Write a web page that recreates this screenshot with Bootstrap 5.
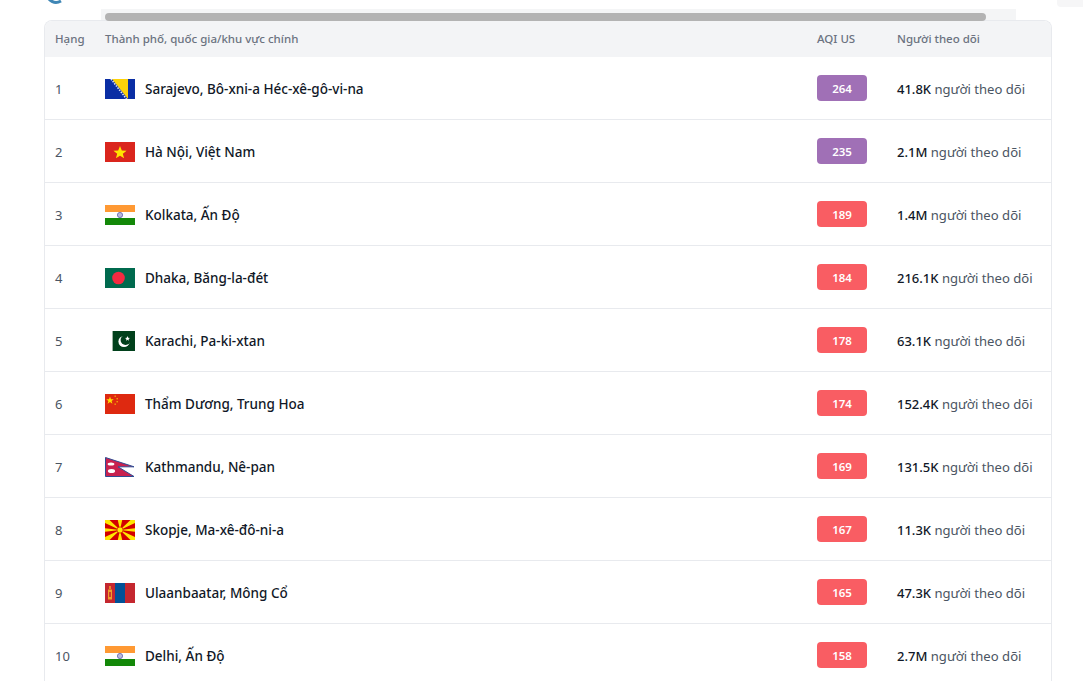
<!DOCTYPE html>
<html lang="vi">
<head>
<meta charset="utf-8">
<title>Xếp hạng AQI</title>
<link href="https://cdn.jsdelivr.net/npm/bootstrap@5.3.0/dist/css/bootstrap.min.css" rel="stylesheet">
<style>
html,body{height:681px;overflow:hidden;background:#fff}
body{font-family:"Noto Sans","Open Sans",sans-serif;font-size:13px;color:#1f2937}
.page-wrap{padding:0 31px 0 44px;position:relative}
.top-strip{height:20px;position:relative}
.logo-arc{position:absolute;left:2px;top:-12px}
.scroll-track{position:absolute;left:57px;top:9px;width:915px;height:11px;background:#f4f5f6}
.scroll-thumb{position:absolute;left:4px;top:4px;width:881px;height:8px;background:#b3b3b3;border-radius:4px;z-index:3}
.corner-tab{position:absolute;left:1057px;top:0;width:26px;height:7px;background:#f6f6f7;border-radius:0 0 0 4px}
.rank-card{border:1px solid #e8eaee;border-bottom:0;border-radius:8px 8px 0 0;overflow:hidden;width:1008px}
.rank-table{table-layout:fixed;width:1006px;margin:0;font-size:13px;border-collapse:separate;border-spacing:0}
.rank-table th{height:36px;background:#f3f4f6;color:#6b7280;font-weight:500;font-size:11.5px;padding:0 0 0 10px;vertical-align:middle;border:0;white-space:nowrap}
.rank-table td{height:63px;padding:0 0 0 10px;vertical-align:middle;border-top:0;border-bottom:1px solid #e8eaee;white-space:nowrap;color:#1f2937}
.rank-table th.name-col,.rank-table td.name-col{padding-left:0}
.rank-table th.aqi-col,.rank-table td.aqi-col{padding-left:0}
.rank-table th.fol-col,.rank-table td.fol-col{padding-left:0}
.rank-table td.rank-num{color:#4b5563}
.flag-box{width:30px;height:20px;flex:none;display:block;margin:2px 10px 0 0}
.city-name{font-weight:500;font-size:13.5px;color:#111827;position:relative;top:1px}
.aqi-chip{display:flex;align-items:center;justify-content:center;width:50px;height:26px;border-radius:4px;color:#fff;font-weight:600;font-size:11.5px;padding-top:2px}
.aqi-purple{background:#a070b6}
.aqi-red{background:#f95d63}
.fol-line,.rank-line{position:relative;top:2px;display:block}
.fol-num{font-weight:500;color:#111827;font-size:13px}
.fol-txt{color:#4b5563;font-size:13.1px}
</style>
</head>
<body>
<div class="corner-tab"></div>
<div class="page-wrap">
  <div class="top-strip">
    <svg class="logo-arc" width="18" height="16" viewBox="0 0 18 16"><path d="M2 10 Q8 17 15 13" fill="none" stroke="#3f86b5" stroke-width="3"/></svg>
    <div class="scroll-track"><div class="scroll-thumb"></div></div>
  </div>
  <div class="rank-card">
    <table class="table rank-table">
      <colgroup><col style="width:60px"><col style="width:712px"><col style="width:80px"><col style="width:154px"></colgroup>
      <thead><tr><th>Hạng</th><th class="name-col">Thành phố, quốc gia/khu vực chính</th><th class="aqi-col">AQI US</th><th class="fol-col">Người theo dõi</th></tr></thead>
      <tbody>
        <tr><td class="rank-num"><span class="rank-line">1</span></td><td class="name-col"><div class="d-flex align-items-center"><svg class="flag-box" viewBox="0 0 30 20"><rect width="30" height="20" fill="#0a2ea4"/><path d="M7 0H23V20Z" fill="#fdd20a"/><path d="M6 0L21.5 20" stroke="#dfe3f5" stroke-width="1.6" stroke-dasharray="1.5 1.2"/></svg><span class="city-name">Sarajevo, Bô-xni-a Héc-xê-gô-vi-na</span></div></td><td class="aqi-col"><div class="aqi-chip aqi-purple">264</div></td><td class="fol-col"><span class="fol-line"><span class="fol-num">41.8K</span> <span class="fol-txt">người theo dõi</span></span></td></tr>
        <tr><td class="rank-num"><span class="rank-line">2</span></td><td class="name-col"><div class="d-flex align-items-center"><svg class="flag-box" viewBox="0 0 30 20"><rect width="30" height="20" fill="#da251d"/><polygon points="15,4 16.8,8.5 21.6,8.7 17.8,11.7 19.1,16.3 15,13.7 10.9,16.3 12.2,11.7 8.4,8.7 13.2,8.5" fill="#ffe500"/></svg><span class="city-name">Hà Nội, Việt Nam</span></div></td><td class="aqi-col"><div class="aqi-chip aqi-purple">235</div></td><td class="fol-col"><span class="fol-line"><span class="fol-num">2.1M</span> <span class="fol-txt">người theo dõi</span></span></td></tr>
        <tr><td class="rank-num"><span class="rank-line">3</span></td><td class="name-col"><div class="d-flex align-items-center"><svg class="flag-box" viewBox="0 0 30 20"><rect width="30" height="20" fill="#fff"/><rect width="30" height="7" fill="#ff9933"/><rect y="13" width="30" height="7" fill="#138808"/><circle cx="15" cy="10" r="2.6" fill="#b9b9dc" stroke="#5f5fae" stroke-width=".8"/></svg><span class="city-name">Kolkata, Ấn Độ</span></div></td><td class="aqi-col"><div class="aqi-chip aqi-red">189</div></td><td class="fol-col"><span class="fol-line"><span class="fol-num">1.4M</span> <span class="fol-txt">người theo dõi</span></span></td></tr>
        <tr><td class="rank-num"><span class="rank-line">4</span></td><td class="name-col"><div class="d-flex align-items-center"><svg class="flag-box" viewBox="0 0 30 20"><rect width="30" height="20" fill="#006a4e"/><circle cx="13.5" cy="10" r="6.3" fill="#f42a41"/></svg><span class="city-name">Dhaka, Băng-la-đét</span></div></td><td class="aqi-col"><div class="aqi-chip aqi-red">184</div></td><td class="fol-col"><span class="fol-line"><span class="fol-num">216.1K</span> <span class="fol-txt">người theo dõi</span></span></td></tr>
        <tr><td class="rank-num"><span class="rank-line">5</span></td><td class="name-col"><div class="d-flex align-items-center"><svg class="flag-box" viewBox="0 0 30 20"><rect x="7" width="1" height="20" fill="#9db3a4"/><rect x="8" width="22" height="20" fill="#01411c"/><circle cx="19" cy="10.5" r="5.6" fill="#fff"/><circle cx="20.6" cy="9" r="5" fill="#01411c"/><polygon points="22.5,5 23.2,6.8 25,7 23.6,8 24,9.8 22.5,8.8 21,9.8 21.4,8 20,7 21.8,6.8" fill="#fff"/></svg><span class="city-name">Karachi, Pa-ki-xtan</span></div></td><td class="aqi-col"><div class="aqi-chip aqi-red">178</div></td><td class="fol-col"><span class="fol-line"><span class="fol-num">63.1K</span> <span class="fol-txt">người theo dõi</span></span></td></tr>
        <tr><td class="rank-num"><span class="rank-line">6</span></td><td class="name-col"><div class="d-flex align-items-center"><svg class="flag-box" viewBox="0 0 30 20"><rect width="30" height="20" fill="#de2910"/><polygon points="5,2.5 6,5.2 8.8,5.3 6.6,7 7.4,9.7 5,8.1 2.6,9.7 3.4,7 1.2,5.3 4,5.2" fill="#ffde00"/><g fill="#f3a50a"><rect x="9.5" y="1.5" width="1.4" height="1.4"/><rect x="11.5" y="4" width="1.4" height="1.4"/><rect x="11.5" y="7" width="1.4" height="1.4"/><rect x="9.5" y="9.5" width="1.4" height="1.4"/></g></svg><span class="city-name">Thẩm Dương, Trung Hoa</span></div></td><td class="aqi-col"><div class="aqi-chip aqi-red">174</div></td><td class="fol-col"><span class="fol-line"><span class="fol-num">152.4K</span> <span class="fol-txt">người theo dõi</span></span></td></tr>
        <tr><td class="rank-num"><span class="rank-line">7</span></td><td class="name-col"><div class="d-flex align-items-center"><svg class="flag-box" viewBox="0 0 30 20"><path d="M.5 .5L29 9.8H13L29 19.5H.5Z" fill="#c8214f" stroke="#2f4c93" stroke-width="1"/><ellipse cx="6" cy="7" rx="3.4" ry="1.6" fill="#fff"/><ellipse cx="6.5" cy="14" rx="3.6" ry="2" fill="#fff"/></svg><span class="city-name">Kathmandu, Nê-pan</span></div></td><td class="aqi-col"><div class="aqi-chip aqi-red">169</div></td><td class="fol-col"><span class="fol-line"><span class="fol-num">131.5K</span> <span class="fol-txt">người theo dõi</span></span></td></tr>
        <tr><td class="rank-num"><span class="rank-line">8</span></td><td class="name-col"><div class="d-flex align-items-center"><svg class="flag-box" viewBox="0 0 30 20"><rect width="30" height="20" fill="#d20000"/><g fill="#ffe600"><path d="M0 0H4.5L15 10 0 3Z"/><path d="M30 0H25.5L15 10 30 3Z"/><path d="M0 20H4.5L15 10 0 17Z"/><path d="M30 20H25.5L15 10 30 17Z"/><path d="M12.8 0H17.2L15 10Z"/><path d="M12.8 20H17.2L15 10Z"/><path d="M0 8.2V11.8L15 10Z"/><path d="M30 8.2V11.8L15 10Z"/></g><circle cx="15" cy="10" r="3" fill="#ffe600" stroke="#d20000" stroke-width=".6"/></svg><span class="city-name">Skopje, Ma-xê-đô-ni-a</span></div></td><td class="aqi-col"><div class="aqi-chip aqi-red">167</div></td><td class="fol-col"><span class="fol-line"><span class="fol-num">11.3K</span> <span class="fol-txt">người theo dõi</span></span></td></tr>
        <tr><td class="rank-num"><span class="rank-line">9</span></td><td class="name-col"><div class="d-flex align-items-center"><svg class="flag-box" viewBox="0 0 30 20"><rect width="30" height="20" fill="#c4272f"/><rect x="10" width="10" height="20" fill="#015197"/><g fill="#f0a02a"><rect x="3" y="6.5" width="4" height="10"/><rect x="4.2" y="3" width="1.6" height="3"/></g><rect x="4.2" y="9" width="1.6" height="5" fill="#c4272f"/></svg><span class="city-name">Ulaanbaatar, Mông Cổ</span></div></td><td class="aqi-col"><div class="aqi-chip aqi-red">165</div></td><td class="fol-col"><span class="fol-line"><span class="fol-num">47.3K</span> <span class="fol-txt">người theo dõi</span></span></td></tr>
        <tr><td class="rank-num"><span class="rank-line">10</span></td><td class="name-col"><div class="d-flex align-items-center"><svg class="flag-box" viewBox="0 0 30 20"><rect width="30" height="20" fill="#fff"/><rect width="30" height="7" fill="#ff9933"/><rect y="13" width="30" height="7" fill="#138808"/><circle cx="15" cy="10" r="2.6" fill="#b9b9dc" stroke="#5f5fae" stroke-width=".8"/></svg><span class="city-name">Delhi, Ấn Độ</span></div></td><td class="aqi-col"><div class="aqi-chip aqi-red">158</div></td><td class="fol-col"><span class="fol-line"><span class="fol-num">2.7M</span> <span class="fol-txt">người theo dõi</span></span></td></tr>
      </tbody>
    </table>
  </div>
</div>
<script src="https://cdn.jsdelivr.net/npm/bootstrap@5.3.0/dist/js/bootstrap.bundle.min.js"></script>
</body>
</html>
